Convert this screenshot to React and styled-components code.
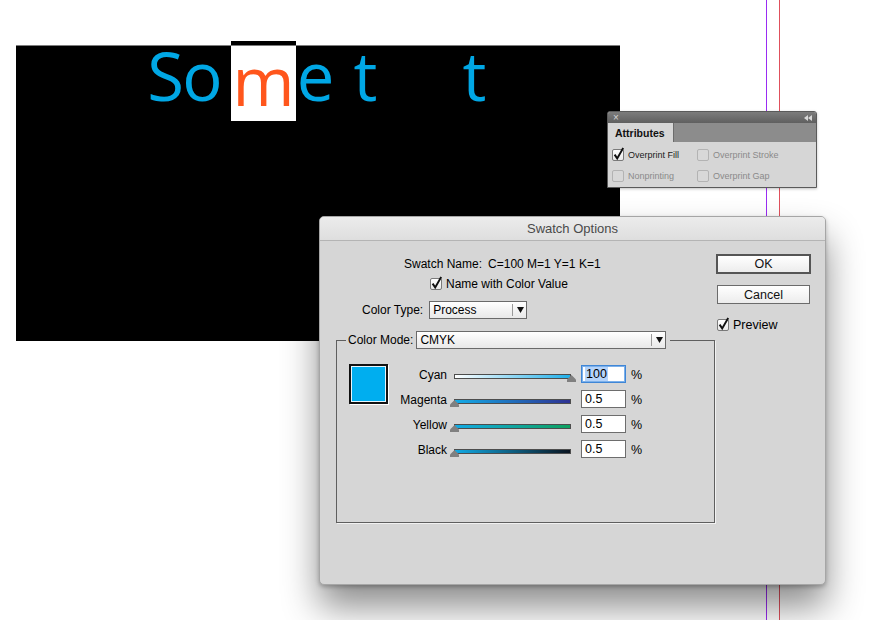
import React from 'react';
import styled, { createGlobalStyle } from 'styled-components';

const Global = createGlobalStyle`
  html, body { margin: 0; padding: 0; background: #fff; }
  body { font-family: "Liberation Sans", Arial, sans-serif; color: #000; }
`;

const Canvas = styled.div`
  position: relative;
  width: 869px;
  height: 620px;
  overflow: hidden;
  background: #fff;
`;

const Guide = styled.div`
  position: absolute;
  top: 0;
  bottom: 0;
  left: ${(p) => p.$x}px;
  width: 1px;
  background: ${(p) => p.$color};
`;

/* ---------- Text frame on the page ---------- */
const TextFrame = styled.div`
  position: absolute;
  left: 16px;
  top: 45px;
  width: 604px;
  height: 296px;
  box-sizing: border-box;
  background: #000;
  border-top: 1px solid #7c7c7c;
  display: flex;
  align-items: flex-start;
  padding-left: 130px;
  font-family: "Open Sans", sans-serif;
  font-size: 67px;
  line-height: 59px;
  color: #00a7e5;
`;

const Glyph = styled.span`
  flex: none;
  display: flex;
  justify-content: center;
  width: ${(p) => p.$w}px;
  margin-left: ${(p) => p.$ml || 0}px;
`;

const SelectedGlyph = styled(Glyph)`
  position: relative;
  height: 75px;
  box-sizing: border-box;
  padding-top: 5px;
  background: #fff;
  color: #ff561c;
  &::before {
    content: '';
    position: absolute;
    left: 0;
    right: 0;
    top: -5px;
    height: 4px;
    background: #000;
  }
`;

/* ---------- Checkbox ---------- */
const Box = styled.span`
  position: relative;
  flex: none;
  width: ${(p) => p.$size}px;
  height: ${(p) => p.$size}px;
  box-sizing: border-box;
  border: 1px solid ${(p) => (p.$disabled ? '#b3b3b3' : '#7a7a7a')};
  background: ${(p) => (p.$disabled ? '#d8d8d8' : 'linear-gradient(#ffffff, #e9e9e9)')};
  border-radius: 2px;
  & > svg {
    position: absolute;
    left: 0;
    top: 0;
    overflow: visible;
  }
`;

function Check({ checked, disabled, size = 12 }) {
  return (
    <Box $size={size} $disabled={disabled}>
      {checked && (
        <svg width={size - 2} height={size - 2} viewBox="0 0 10 10">
          <path d="M1.6 4.6 L4.2 8.4 L10.2 -2" fill="none" stroke="#111" strokeWidth="1.9" strokeLinejoin="miter" />
        </svg>
      )}
    </Box>
  );
}

/* ---------- Attributes panel ---------- */
const Panel = styled.div`
  position: absolute;
  left: 607px;
  top: 111px;
  width: 210px;
  box-sizing: border-box;
  border: 1px solid #5a5a5a;
  border-radius: 3px 3px 0 0;
  background: #d6d6d6;
  box-shadow: 0 1px 3px rgba(0, 0, 0, 0.25);
  font-size: 9px;
`;

const PanelTitle = styled.div`
  height: 11px;
  display: flex;
  align-items: center;
  justify-content: space-between;
  padding: 0 4px 0 5px;
  background: linear-gradient(#7c7c7c, #5f5f5f);
  border-radius: 2px 2px 0 0;
  color: #d4d4d4;
  font-size: 10px;
  line-height: 11px;
`;

const TabRow = styled.div`
  display: flex;
  height: 19px;
  background: #8c8c8c;
`;

const Tab = styled.div`
  width: 58px;
  padding-left: 7px;
  background: #d6d6d6;
  border-right: 1px solid #6c6c6c;
  font-weight: bold;
  font-size: 10.5px;
  line-height: 20px;
  color: #111;
`;

const PanelBody = styled.div`
  display: grid;
  grid-template-columns: 85px auto;
  row-gap: 9px;
  padding: 7px 0 5px 4px;
`;

const PanelOption = styled.label`
  display: flex;
  align-items: center;
  gap: 4px;
  height: 12px;
  color: ${(p) => (p.$disabled ? '#8a8a8a' : '#1a1a1a')};
  white-space: nowrap;
`;

/* ---------- Dialog ---------- */
const Dialog = styled.div`
  position: absolute;
  left: 319px;
  top: 216px;
  width: 507px;
  height: 369px;
  box-sizing: border-box;
  display: flex;
  flex-direction: column;
  background: #d6d6d6;
  border: 1px solid #a6a6a6;
  border-radius: 5px;
  box-shadow: 0 22px 36px rgba(0, 0, 0, 0.45), 0 2px 4px rgba(0, 0, 0, 0.25);
  font-size: 12px;
`;

const TitleBar = styled.div`
  height: 23px;
  border-bottom: 1px solid #b4b4b4;
  border-radius: 4px 4px 0 0;
  background: linear-gradient(#ececec, #dedede);
  display: flex;
  align-items: center;
  justify-content: center;
  color: #4a4a4a;
  font-size: 13px;
`;

const DialogBody = styled.div`
  display: flex;
  flex: 1;
`;

const Main = styled.div`
  width: 396px;
  display: flex;
  flex-direction: column;
  padding-top: 15px;
`;

const Row = styled.div`
  display: flex;
  align-items: center;
  gap: ${(p) => p.$gap || 0}px;
  height: ${(p) => p.$h}px;
  margin-top: ${(p) => p.$mt || 0}px;
  padding-left: ${(p) => p.$pl}px;
  white-space: nowrap;
`;

const SelectBox = styled.div`
  width: ${(p) => p.$w}px;
  height: 18px;
  box-sizing: border-box;
  display: flex;
  align-items: center;
  border: 1px solid #6a6a6a;
  background: linear-gradient(#ffffff, #e8e8e8);
  font-size: 12px;
`;

const SelectText = styled.span`
  flex: 1;
  padding-left: 3px;
`;

const SelectArrow = styled.span`
  width: 11px;
  height: 12px;
  margin-right: 2px;
  border-left: 1px solid #9a9a9a;
  display: flex;
  align-items: center;
  justify-content: flex-end;
`;

function Select({ w, value }) {
  return (
    <SelectBox $w={w}>
      <SelectText>{value}</SelectText>
      <SelectArrow>
        <svg width="7" height="6" viewBox="0 0 7 6">
          <polygon points="0,0 7,0 3.5,6" fill="#111" />
        </svg>
      </SelectArrow>
    </SelectBox>
  );
}

const Group = styled.div`
  margin: 21px 0 0 16px;
  width: 379px;
  height: 183px;
  box-sizing: border-box;
  border: 1px solid #5f5f5f;
  box-shadow: 1px 1px 0 #f2f2f2;
`;

const Legend = styled.div`
  display: flex;
  align-items: center;
  gap: 3px;
  width: fit-content;
  height: 18px;
  margin: -10px 0 0 9px;
  padding: 0 4px 0 2px;
  background: #d6d6d6;
`;

const GroupContent = styled.div`
  display: flex;
  align-items: flex-start;
  margin-top: 15px;
  padding-left: 12px;
`;

const Swatch = styled.div`
  flex: none;
  width: 39px;
  height: 40px;
  box-sizing: border-box;
  border: 2px solid #111;
  background: #00aeef;
  box-shadow: 1px 1px 0 #fff, inset 0 0 0 1px #e8f6fc;
`;

const SliderGrid = styled.div`
  display: grid;
  grid-template-columns: 66px 127px 50px auto;
  grid-auto-rows: 18px;
  row-gap: 7px;
  margin-top: 1px;
  align-items: center;
`;

const SliderLabel = styled.span`
  text-align: right;
  padding-right: 7px;
  line-height: 18px;
  padding-top: 2px;
`;

const SliderCell = styled.div`
  position: relative;
  width: 117px;
  height: 18px;
`;

const Track = styled.div`
  position: absolute;
  left: 0;
  right: 0;
  top: 9px;
  height: 5px;
  box-sizing: border-box;
  border: 1px solid #4d4d4d;
  background: ${(p) => p.$bg};
`;

const Thumb = styled.svg`
  position: absolute;
  top: 10px;
  width: 9px;
  height: 7px;
`;

const Field = styled.div`
  width: 45px;
  height: 18px;
  box-sizing: border-box;
  border: 1px solid ${(p) => (p.$focus ? '#3f86d6' : '#6d6d6d')};
  box-shadow: ${(p) => (p.$focus ? 'inset 0 0 0 1px #7cb0ea' : 'none')};
  background: #fff;
  padding-left: 3px;
  font-size: 12.5px;
  line-height: 16px;
`;

const Selected = styled.span`
  background: #b4d3fa;
  padding: 0 1px;
`;

const Percent = styled.span`
  font-size: 12.5px;
  padding-top: 2px;
`;

const Side = styled.div`
  display: flex;
  flex-direction: column;
  align-items: flex-start;
  padding-top: 13px;
`;

const Button = styled.div`
  width: ${(p) => (p.$default ? 95 : 93)}px;
  height: ${(p) => (p.$default ? 20 : 19)}px;
  margin-left: ${(p) => (p.$default ? 0 : 1)}px;
  margin-top: ${(p) => p.$mt || 0}px;
  box-sizing: border-box;
  border: ${(p) => (p.$default ? '2px solid #555' : '1px solid #6b6b6b')};
  background: linear-gradient(#ffffff, #ececec);
  display: flex;
  align-items: center;
  justify-content: center;
  font-size: 12.5px;
  color: #111;
`;

const PreviewRow = styled.label`
  display: flex;
  align-items: center;
  gap: 4px;
  margin: 14px 0 0 1px;
  height: 13px;
  font-size: 12.5px;
`;

const sliders = [
  { name: 'Cyan', value: '100', pos: 1, bg: 'linear-gradient(90deg, #ffffff, #20b0ea)', focus: true },
  { name: 'Magenta', value: '0.5', pos: 0, bg: 'linear-gradient(90deg, #14abe6, #2e3192)' },
  { name: 'Yellow', value: '0.5', pos: 0, bg: 'linear-gradient(90deg, #12aae4, #0ea160)' },
  { name: 'Black', value: '0.5', pos: 0, bg: 'linear-gradient(90deg, #12a9e3, #0a1420)' },
];

export default function App() {
  return (
    <Canvas>
      <Global />
      <Guide $x={766} $color="#9a2cf2" />
      <Guide $x={779} $color="#e0505c" />

      <TextFrame>
        <Glyph $w={39}>S</Glyph>
        <Glyph $w={35}>o</Glyph>
        <SelectedGlyph $w={65} $ml={11}>m</SelectedGlyph>
        <Glyph $w={39}>e</Glyph>
        <Glyph $w={61}>t</Glyph>
        <Glyph $w={157}>t</Glyph>
      </TextFrame>

      <Panel>
        <PanelTitle>
          <span>×</span>
          <svg width="8" height="6" viewBox="0 0 8 6">
            <polygon points="0,3 4,0 4,6" fill="#d8d8d8" />
            <polygon points="4,3 8,0 8,6" fill="#d8d8d8" />
          </svg>
        </PanelTitle>
        <TabRow>
          <Tab>Attributes</Tab>
        </TabRow>
        <PanelBody>
          <PanelOption>
            <Check checked />
            Overprint Fill
          </PanelOption>
          <PanelOption $disabled>
            <Check disabled />
            Overprint Stroke
          </PanelOption>
          <PanelOption $disabled>
            <Check disabled />
            Nonprinting
          </PanelOption>
          <PanelOption $disabled>
            <Check disabled />
            Overprint Gap
          </PanelOption>
        </PanelBody>
      </Panel>

      <Dialog>
        <TitleBar>Swatch Options</TitleBar>
        <DialogBody>
          <Main>
            <Row $h={16} $pl={84} $gap={6}>
              <span>Swatch Name:</span>
              <span>C=100 M=1 Y=1 K=1</span>
            </Row>
            <Row $h={14} $mt={5} $pl={110} $gap={4}>
              <Check checked />
              <span>Name with Color Value</span>
            </Row>
            <Row $h={18} $mt={10} $pl={42} $gap={6}>
              <span>Color Type:</span>
              <Select w={98} value="Process" />
            </Row>
            <Group>
              <Legend>
                <span>Color Mode:</span>
                <Select w={250} value="CMYK" />
              </Legend>
              <GroupContent>
                <Swatch />
                <SliderGrid>
                  {sliders.map((s) => (
                    <React.Fragment key={s.name}>
                      <SliderLabel>{s.name}</SliderLabel>
                      <SliderCell>
                        <Track $bg={s.bg} />
                        <Thumb viewBox="0 0 9 7" style={{ left: `${s.pos * 117 - 4.5}px` }}>
                          <polygon points="4.5,0 9,4.5 9,7 0,7 0,4.5" fill="#808080" />
                        </Thumb>
                      </SliderCell>
                      <Field $focus={s.focus}>
                        {s.focus ? <Selected>{s.value}</Selected> : s.value}
                      </Field>
                      <Percent>%</Percent>
                    </React.Fragment>
                  ))}
                </SliderGrid>
              </GroupContent>
            </Group>
          </Main>
          <Side>
            <Button $default>OK</Button>
            <Button $mt={11}>Cancel</Button>
            <PreviewRow>
              <Check checked />
              <span>Preview</span>
            </PreviewRow>
          </Side>
        </DialogBody>
      </Dialog>
    </Canvas>
  );
}
